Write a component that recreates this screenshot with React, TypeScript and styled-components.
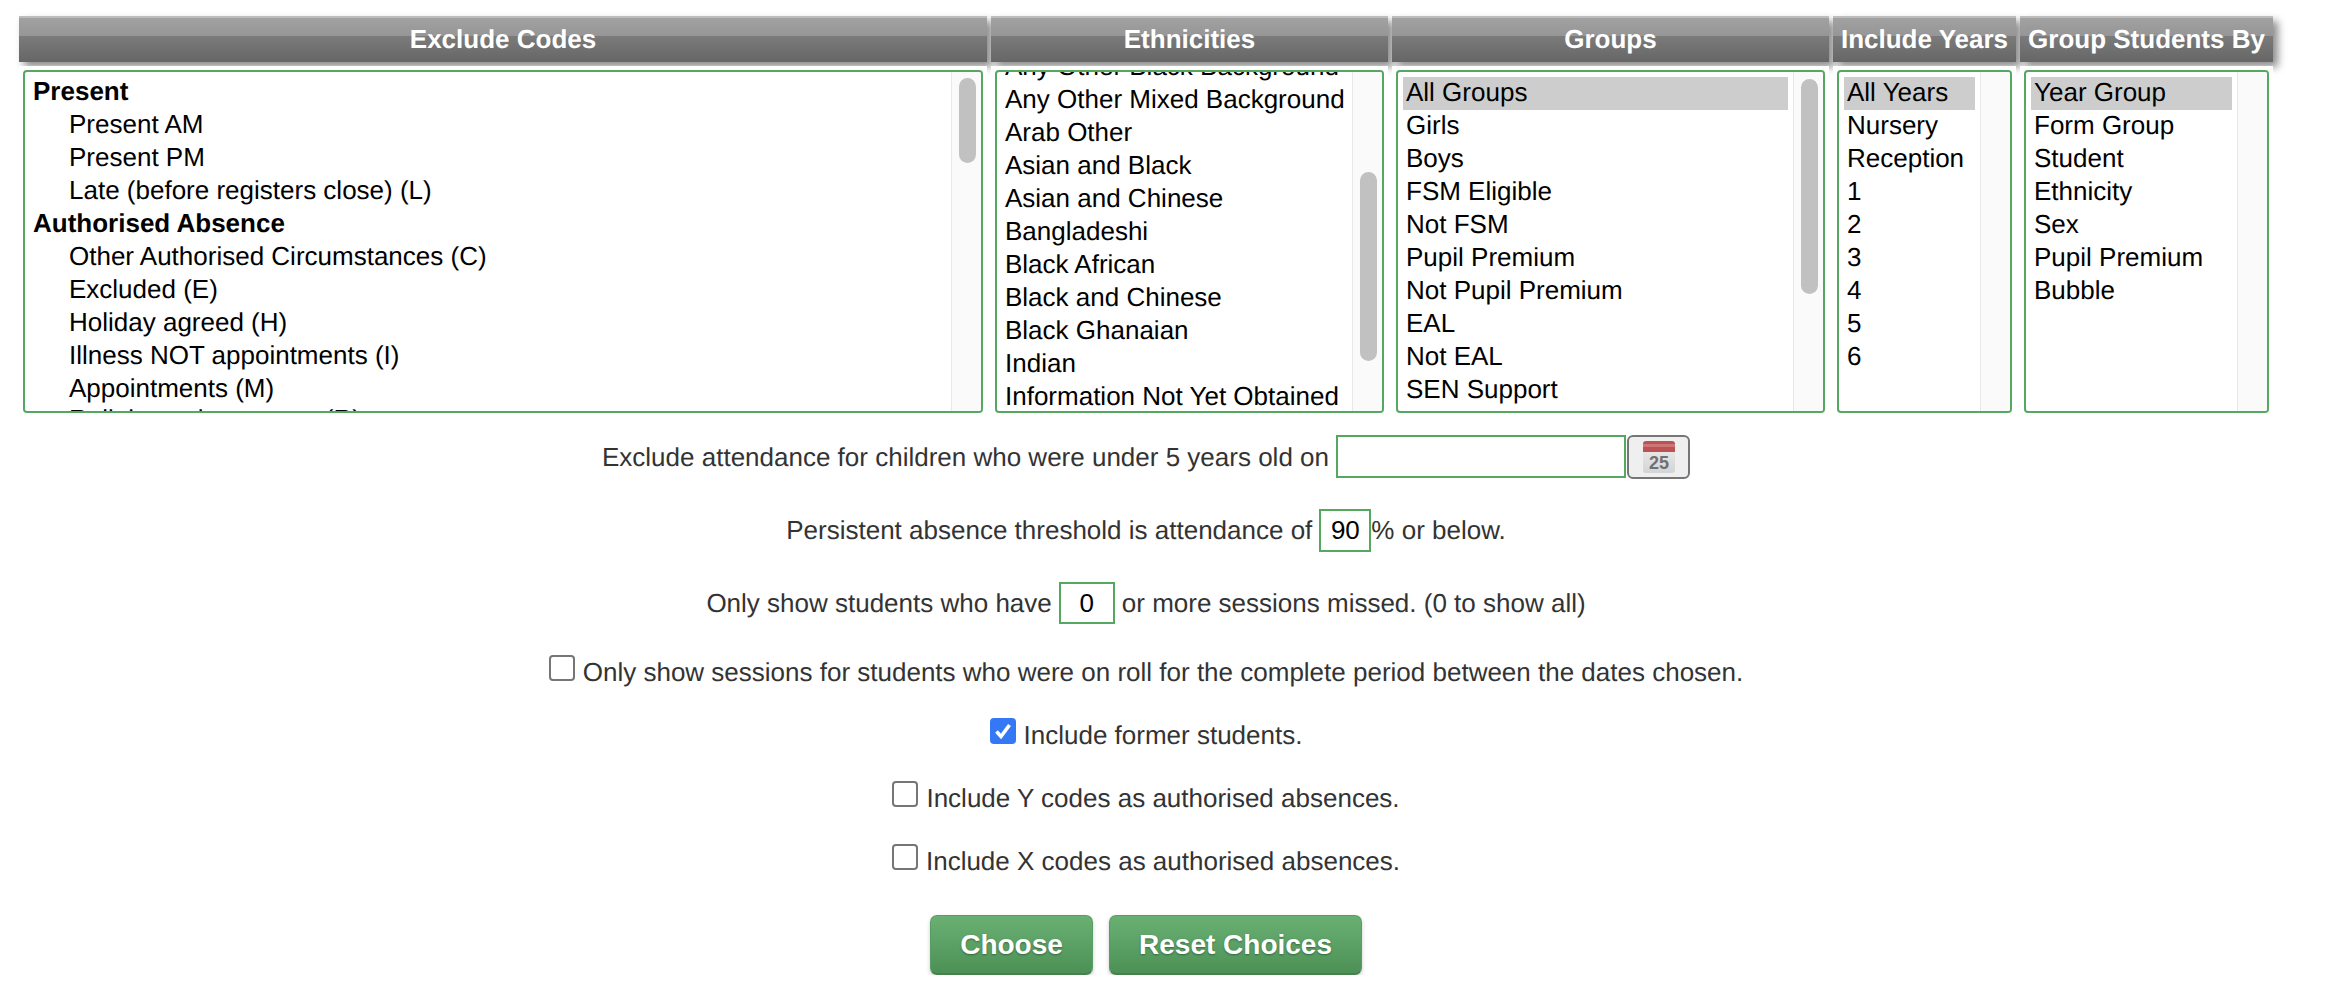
import React from "react";
import styled, { createGlobalStyle } from "styled-components";

const GlobalStyle = createGlobalStyle`
  html, body {
    margin: 0;
    padding: 0;
    background: #fff;
    font-family: "Liberation Sans", Arial, sans-serif;
    text-rendering: geometricPrecision;
  }
`;

const Page = styled.div`
  width: 2254px;
  margin-left: 19px;
  padding-top: 16px;
`;

const Columns = styled.div`
  display: grid;
  grid-template-columns: 968px 397px 437px 183px 253px;
  column-gap: 4px;
`;

const Heading = styled.div`
  height: 46px;
  border-top: 2px solid #bdbdbd;
  box-sizing: border-box;
  background: linear-gradient(to bottom, #a1a1a1 0, #969696 18px, #7b7b7b 18px, #666 100%);
  box-shadow: 5px 5px 8px rgba(0, 0, 0, 0.45);
  color: #fff;
  font-size: 26px;
  font-weight: bold;
  line-height: 42px;
  text-align: center;
  white-space: nowrap;
`;

const Cell = styled.div`
  position: relative;
  background: #fff;
  margin-top: 4px;
  padding: 4px 4px 0;
`;

const ListBox = styled.div`
  display: flex;
  height: 343px;
  box-sizing: border-box;
  border: 2px solid #55a85f;
  border-radius: 4px;
  overflow: hidden;
  background: #fff;
`;

const Options = styled.div<{ $top: number }>`
  flex: 1;
  min-width: 0;
  margin-top: ${(p) => Math.min(p.$top, 0)}px;
  padding: ${(p) => Math.max(p.$top, 0)}px 5px 0;
  font-size: 26px;
  line-height: 31px;
  color: #000;
`;

const Option = styled.div<{ $selected?: boolean; $bold?: boolean; $indent?: boolean; $lift?: number }>`
  height: 33px;
  margin-top: ${(p) => -(p.$lift ?? 0)}px;
  padding-left: ${(p) => (p.$indent ? 39 : 3)}px;
  white-space: nowrap;
  font-weight: ${(p) => (p.$bold ? "bold" : "normal")};
  background: ${(p) => (p.$selected ? "#cdcdcd" : "transparent")};
`;

const Track = styled.div`
  flex: none;
  width: 29px;
  border-left: 1px solid #e8e8e8;
  background: #fafafa;
`;

const Thumb = styled.div<{ $top: number; $height: number }>`
  width: 17px;
  height: ${(p) => p.$height}px;
  margin: ${(p) => p.$top}px 0 0 7px;
  border-radius: 9px;
  background: #c1c1c1;
`;

const Form = styled.form`
  display: flex;
  flex-direction: column;
  align-items: center;
  padding-top: 22px;
  font-size: 26px;
  color: #333;
`;

const Row = styled.div<{ $gap: number; $height: number }>`
  display: flex;
  align-items: center;
  height: ${(p) => p.$height}px;
  margin-top: ${(p) => p.$gap}px;
  white-space: nowrap;
`;

const CheckRow = styled(Row)`
  align-items: flex-start;
`;

const TextBox = styled.input<{ $width: number; $height: number; $after?: number }>`
  align-self: flex-start;
  width: ${(p) => p.$width}px;
  height: ${(p) => p.$height}px;
  box-sizing: border-box;
  margin: 0 ${(p) => p.$after ?? 0}px 0 7px;
  padding: 0;
  border: 2px solid #55a85f;
  outline: none;
  background: #fff;
  color: #000;
  font: 26px "Liberation Sans", Arial, sans-serif;
  text-align: center;
`;

const CalendarButton = styled.button`
  display: flex;
  align-items: center;
  justify-content: center;
  width: 63px;
  height: 44px;
  margin-left: 1px;
  padding: 0;
  border: 2px solid #767676;
  border-radius: 6px;
  background: #efefef;
`;

const Box = styled.span<{ $checked?: boolean }>`
  display: flex;
  align-items: center;
  justify-content: center;
  width: 26px;
  height: 26px;
  box-sizing: border-box;
  margin-right: 8px;
  border: ${(p) => (p.$checked ? "none" : "2px solid #767676")};
  border-radius: 4px;
  background: ${(p) => (p.$checked ? "#3478f6" : "#fff")};
`;

const CheckLabel = styled.span`
  line-height: 34px;
`;

const Buttons = styled.div`
  display: flex;
  gap: 16px;
  margin-top: 41px;
`;

const GreenButton = styled.button<{ $width: number }>`
  width: ${(p) => p.$width}px;
  height: 60px;
  padding: 0;
  border: 1px solid #5a9c63;
  border-bottom: 2px solid #47804e;
  border-radius: 7px;
  background: linear-gradient(to bottom, #6ab073, #4c9055);
  box-shadow: 0 2px 4px rgba(0, 0, 0, 0.2);
  color: #fff;
  font: bold 28px "Liberation Sans", Arial, sans-serif;
  text-shadow: 0 1px 2px rgba(0, 0, 0, 0.35);
`;

const CalendarIcon = () => (
  <svg width="32" height="32" viewBox="0 0 32 32">
    <defs>
      <linearGradient id="calBody" x1="0" y1="0" x2="0" y2="1">
        <stop offset="0" stopColor="#efefef" />
        <stop offset="1" stopColor="#d4d4d4" />
      </linearGradient>
    </defs>
    <rect x="0" y="0" width="32" height="32" rx="3" fill="url(#calBody)" />
    <path d="M0 11V3a3 3 0 0 1 3-3h26a3 3 0 0 1 3 3v8z" fill="#bb5254" />
    <rect x="0" y="3" width="32" height="3" fill="#cf7476" />
    <text x="16" y="28" textAnchor="middle" fontFamily="Liberation Sans, Arial, sans-serif" fontWeight="bold" fontSize="18" fill="#707070">
      25
    </text>
  </svg>
);

const CheckMark = () => (
  <svg width="26" height="26" viewBox="0 0 26 26">
    <path d="M6.500 13.500l4.500 5L19.500 7" fill="none" stroke="#fff" strokeWidth="3.6" />
  </svg>
);

type Item = { label: string; bold?: boolean; indent?: boolean; selected?: boolean; lift?: number };

const names = (list: string[], first = false): Item[] =>
  list.map((label, i) => ({ label, selected: first && i === 0 }));

const columns: { title: string; top: number; thumb?: [number, number]; items: Item[] }[] = [
  {
    title: "Exclude Codes",
    top: 4,
    thumb: [6, 85],
    items: [
      { label: "Present", bold: true },
      { label: "Present AM", indent: true },
      { label: "Present PM", indent: true },
      { label: "Late (before registers close) (L)", indent: true },
      { label: "Authorised Absence", bold: true },
      { label: "Other Authorised Circumstances (C)", indent: true },
      { label: "Excluded (E)", indent: true },
      { label: "Holiday agreed (H)", indent: true },
      { label: "Illness NOT appointments (I)", indent: true },
      { label: "Appointments (M)", indent: true },
      { label: "Religious observance (R)", indent: true, lift: 2 },
    ],
  },
  {
    title: "Ethnicities",
    top: -21,
    thumb: [100, 189],
    items: names([
      "Any Other Black Background",
      "Any Other Mixed Background",
      "Arab Other",
      "Asian and Black",
      "Asian and Chinese",
      "Bangladeshi",
      "Black African",
      "Black and Chinese",
      "Black Ghanaian",
      "Indian",
      "Information Not Yet Obtained",
    ]),
  },
  {
    title: "Groups",
    top: 5,
    thumb: [7, 215],
    items: names(
      ["All Groups", "Girls", "Boys", "FSM Eligible", "Not FSM", "Pupil Premium", "Not Pupil Premium", "EAL", "Not EAL", "SEN Support"],
      true,
    ),
  },
  {
    title: "Include Years",
    top: 5,
    items: names(["All Years", "Nursery", "Reception", "1", "2", "3", "4", "5", "6"], true),
  },
  {
    title: "Group Students By",
    top: 5,
    items: names(["Year Group", "Form Group", "Student", "Ethnicity", "Sex", "Pupil Premium", "Bubble"], true),
  },
];

export default function App() {
  return (
    <Page>
      <GlobalStyle />
      <Columns>
        {columns.map((c) => (
          <Heading key={c.title}>{c.title}</Heading>
        ))}
        {columns.map((c) => (
          <Cell key={c.title}>
            <ListBox>
              <Options $top={c.top}>
                {c.items.map((item) => (
                  <Option key={item.label} $bold={item.bold} $indent={item.indent} $selected={item.selected} $lift={item.lift}>
                    {item.label}
                  </Option>
                ))}
              </Options>
              <Track>{c.thumb && <Thumb $top={c.thumb[0]} $height={c.thumb[1]} />}</Track>
            </ListBox>
          </Cell>
        ))}
      </Columns>
      <Form>
        <Row $gap={0} $height={44}>
          Exclude attendance for children who were under 5 years old on
          <TextBox $width={290} $height={43} readOnly defaultValue="" />
          <CalendarButton type="button">
            <CalendarIcon />
          </CalendarButton>
        </Row>
        <Row $gap={30} $height={43}>
          Persistent absence threshold is attendance of
          <TextBox $width={52} $height={43} readOnly defaultValue="90" />
          % or below.
        </Row>
        <Row $gap={30} $height={42}>
          Only show students who have
          <TextBox $width={56} $height={42} $after={7} readOnly defaultValue="0" />
          or more sessions missed. (0 to show all)
        </Row>
        <CheckRow $gap={31} $height={30}>
          <Box />
          <CheckLabel>Only show sessions for students who were on roll for the complete period between the dates chosen.</CheckLabel>
        </CheckRow>
        <CheckRow $gap={33} $height={30}>
          <Box $checked>
            <CheckMark />
          </Box>
          <CheckLabel>Include former students.</CheckLabel>
        </CheckRow>
        <CheckRow $gap={33} $height={30}>
          <Box />
          <CheckLabel>Include Y codes as authorised absences.</CheckLabel>
        </CheckRow>
        <CheckRow $gap={33} $height={30}>
          <Box />
          <CheckLabel>Include X codes as authorised absences.</CheckLabel>
        </CheckRow>
        <Buttons>
          <GreenButton type="button" $width={163}>
            Choose
          </GreenButton>
          <GreenButton type="button" $width={253}>
            Reset Choices
          </GreenButton>
        </Buttons>
      </Form>
    </Page>
  );
}
